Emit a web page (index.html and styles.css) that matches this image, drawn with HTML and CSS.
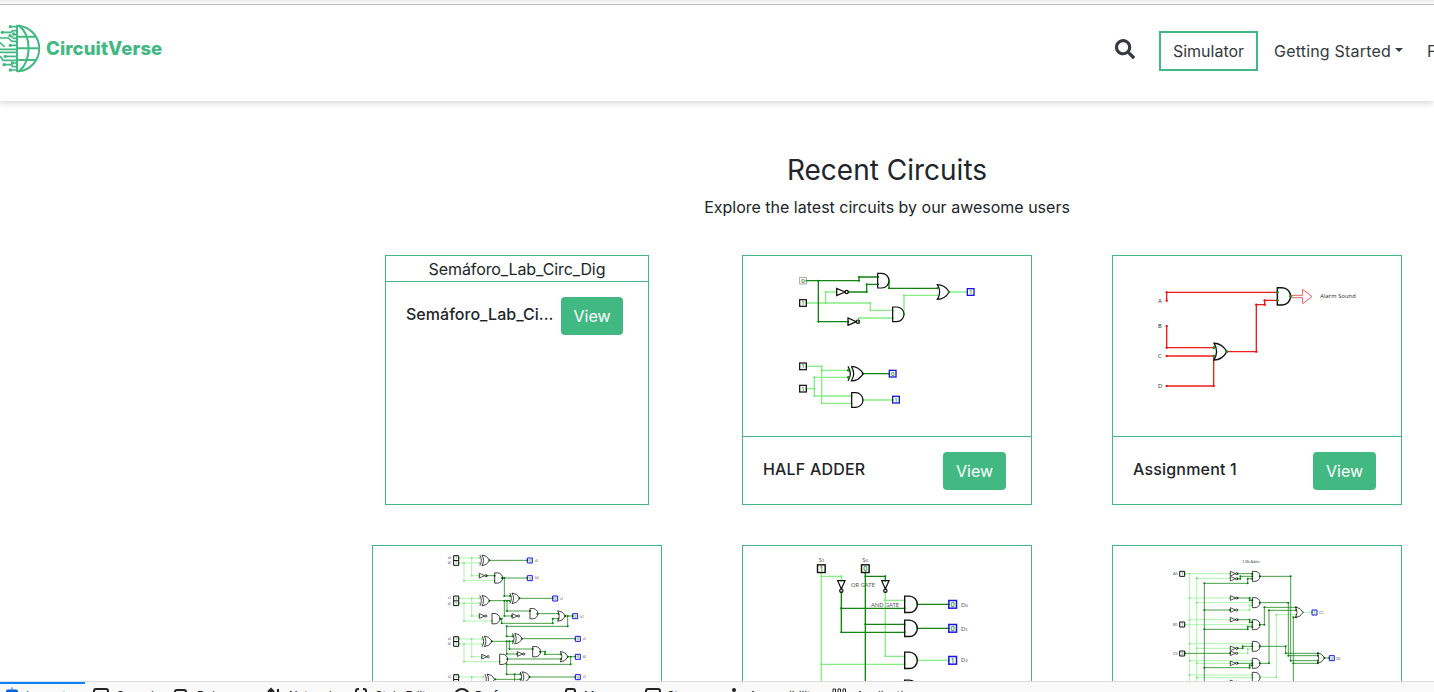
FILE: index.html
```html
<!DOCTYPE html>
<html lang="en">
<head>
<meta charset="utf-8">
<title>CircuitVerse</title>
<link rel="stylesheet" href="styles.css">
</head>
<body>
<svg class="defs" width="0" height="0">
  <defs>
    <path id="and" d="M0-22H12A22 22 0 0 1 12 22H0Z"/>
    <path id="or" d="M0-22Q22-22 36 0Q22 22 0 22Q14 0 0-22Z"/>
    <path id="xor" d="M0-22Q22-22 36 0Q22 22 0 22Q14 0 0-22M-10-22Q4 0-10 22"/>
    <path id="not" d="M0-11V11L25 0ZM25 0a5 5 0 1 0 10 0a5 5 0 1 0-10 0"/>
    <rect id="pin" x="-10" y="-10" width="20" height="20"/>
    <marker id="dotG" markerUnits="userSpaceOnUse" markerWidth="8" markerHeight="8" refX="4" refY="4"><circle cx="4" cy="4" r="3" fill="#008000"/></marker>
    <marker id="dotL" markerUnits="userSpaceOnUse" markerWidth="8" markerHeight="8" refX="4" refY="4"><circle cx="4" cy="4" r="3" fill="#7de87d"/></marker>
    <marker id="dotR" markerUnits="userSpaceOnUse" markerWidth="8" markerHeight="8" refX="4" refY="4"><circle cx="4" cy="4" r="3.5" fill="#f01010"/></marker>
  </defs>
</svg>
<div class="chrome-edge"></div>
<div class="page">
  <header class="navbar">
    <a class="brand">
      <svg class="logo" viewBox="0 66 126 156">
        <path d="M51 75V215M51 77H57A69 69 0 0 1 57 214H51M51 110H108M51 145H120M51 180H108M57 77Q85 98 86 145Q85 192 57 214" stroke-width="6"/>
        <path d="M51 80H33M51 92H38L33 97H8M51 104H41M51 115H42L31 107M51 124H36L25 114H0M51 136H32M51 148H0M51 157H0M51 169H16M51 181H9L0 168M51 189H38M51 200H39L33 194H12M51 210H31M0 128L14 141" stroke-width="5"/>
        <g class="nodes"><circle cx="31" cy="80" r="5"/><circle cx="7" cy="97" r="5"/><circle cx="41" cy="102" r="5"/><circle cx="30" cy="107" r="5"/><circle cx="31" cy="136" r="5"/><circle cx="16" cy="169" r="5"/><circle cx="37" cy="189" r="5"/><circle cx="12" cy="194" r="5"/><circle cx="31" cy="210" r="5"/></g>
      </svg>
      <span class="brand-name">CircuitVerse</span>
    </a>
    <nav class="nav">
      <svg class="search" viewBox="0 0 512 512"><path d="M505 442.700 405.300 343c-4.500-4.500-10.600-7-17-7H372c27.600-35.300 44-79.700 44-128C416 93.100 322.900 0 208 0S0 93.100 0 208s93.100 208 208 208c48.300 0 92.700-16.400 128-44v16.300c0 6.400 2.500 12.500 7 17l99.700 99.700c9.400 9.400 24.600 9.400 33.900 0l28.300-28.300c9.400-9.400 9.400-24.600.1-34zM208 336c-70.700 0-128-57.200-128-128 0-70.700 57.200-128 128-128 70.700 0 128 57.200 128 128 0 70.700-57.200 128-128 128z"/></svg>
      <a class="simulator">Simulator</a>
      <a class="nav-link">Getting Started<span class="caret"></span></a>
      <a class="nav-link features">Features</a>
    </nav>
  </header>
  <main class="container">
    <h2 class="heading">Recent Circuits</h2>
    <p class="lead">Explore the latest circuits by our awesome users</p>
    <div class="grid">
      <article class="card card-narrow">
        <div class="preview-alt">Semáforo_Lab_Circ_Dig</div>
        <div class="card-body"><p class="name">Semáforo_Lab_Ci...</p><a class="view">View</a></div>
      </article>

      <article class="card">
        <svg class="preview" viewBox="-111 -18 864 540">
          <g class="on"><path d="M79 123H271V145H338M137 123V90H170M236 179V168H338M372 157V100H472M506 90H562M79 313H125V325H205M125 325V424H215M79 380H103V346H205M103 380V402H215M248 414H338"/></g>
          <g class="off"><path d="M79 56H237V45H294M115 56V179H205M205 90H260V67H294M327 56V79H472M248 335H328"/></g>
          <g class="gate"><use href="#and" x="293" y="56"/><use href="#and" x="338" y="157"/><use href="#not" x="170" y="90"/><use href="#not" x="204" y="179"/><use href="#or" x="472" y="90"/><use href="#xor" x="214" y="335"/><use href="#and" x="215" y="414"/><use href="#pin" x="69" y="123"/><use href="#pin" x="69" y="313"/><use href="#pin" x="69" y="380"/></g>
          <g class="joints"><circle cx="205" cy="325" r="4"/><circle cx="205" cy="346" r="4"/><circle cx="327" cy="56" r="3"/><circle cx="372" cy="157" r="3"/><circle cx="506" cy="90" r="3"/><circle cx="237" cy="179" r="3"/></g>
          <use class="muted" href="#pin" x="69" y="56"/>
          <g class="out"><use href="#pin" x="572" y="90"/><use href="#pin" x="338" y="335"/><use href="#pin" x="348" y="413"/></g>
          <g class="bits"><text x="69" y="62">0</text><text x="69" y="129">1</text><text x="572" y="96">1</text><text x="69" y="319">1</text><text x="69" y="386">1</text><text x="338" y="341">0</text><text x="348" y="419">1</text></g>
        </svg>
        <div class="card-body"><p class="name">HALF ADDER</p><a class="view">View</a></div>
      </article>

      <article class="card">
        <svg class="preview" viewBox="-81 -18 864 540">
          <g class="red"><path d="M80 116V91H412M80 192V257H221M80 282H221V372H80M260 269H349V128H374V115H412"/></g>
          <path class="arrow" d="M453 100H488V82L516 104L488 125V107H453"/>
          <g class="gate"><use href="#and" transform="translate(412 103) scale(1.170)"/><use href="#or" transform="translate(222 269) scale(1.080 1.150)"/></g>
          <g class="joints"><circle cx="412" cy="91" r="4"/><circle cx="412" cy="115" r="4"/><circle cx="452" cy="103" r="4"/><circle cx="222" cy="257" r="4"/><circle cx="222" cy="282" r="4"/><circle cx="260" cy="269" r="4"/></g>
          <g class="note note-lg"><text x="54" y="122">A</text><text x="54" y="199">B</text><text x="54" y="288">C</text><text x="54" y="378">D</text></g>
          <text class="alarm" x="541" y="109" textLength="106">Alarm Sound</text>
        </svg>
        <div class="card-body"><p class="name">Assignment 1</p><a class="view">View</a></div>
      </article>

      <article class="card">
        <svg class="preview thin" viewBox="-171 18 864 540">
          <g class="on"><path d="M87 54H148M87 69H148M125 54V107H148M102 69V122H194M87 175H148M87 190H148M125 175V228H148M102 190V243H186M87 297H156M87 312H156M125 297V350H156M102 312V365H209M87 411H160M125 411V440"/></g>
          <g class="off"><path d="M178 61H292M170 107H194M217 114H223V168H240M217 114H292M178 182H238M223 182V228H246M231 182V213H300M268 175H368M322 221H385M211 236H215V250H368V236H385M405 228H428M413 228V259H230V289H248M185 304H248M230 304V342H262M238 304V327H308M275 296H436M330 335H345V343H392M232 357H392M413 350H436M422 350V373H230V403H271M196 418H271M254 403V440M298 411H436"/></g>
          <g class="gate"><use href="#xor" transform="translate(156 61) scale(.65 .72)"/><use href="#not" transform="translate(148 107) scale(.65)"/><use href="#and" transform="translate(194 114) scale(.7)"/><use href="#xor" transform="translate(156 182) scale(.65 .72)"/><use href="#xor" transform="translate(246 175) scale(.65 .72)"/><use href="#not" transform="translate(148 228) scale(.65)"/><use href="#not" transform="translate(246 228) scale(.65)"/><use href="#and" transform="translate(186 236) scale(.7)"/><use href="#and" transform="translate(300 221) scale(.7)"/><use href="#or" transform="translate(383 228) scale(.65 .72)"/><use href="#xor" transform="translate(163 304) scale(.65 .72)"/><use href="#xor" transform="translate(254 296) scale(.65 .72)"/><use href="#not" transform="translate(155 350) scale(.65)"/><use href="#not" transform="translate(262 342) scale(.65)"/><use href="#and" transform="translate(209 358) scale(.7)"/><use href="#and" transform="translate(308 335) scale(.7)"/><use href="#or" transform="translate(391 350) scale(.65 .72)"/><use href="#xor" transform="translate(171 418) scale(.65 .72)"/><use href="#xor" transform="translate(277 411) scale(.65 .72)"/>
          <path d="M71 47h15v29h-15zM71 61.500h15M71 168h15v29h-15zM71 182.500h15M71 290h15v29h-15zM71 304.500h15M71 404h15v29h-15zM71 418.500h15"/></g>
          <g class="out"><path d="M292 54h15v15h-15zM292 107h15v15h-15zM368 168h15v15h-15zM428 221h15v15h-15zM436 289h15v15h-15zM436 343h15v15h-15zM436 404h15v15h-15z"/></g>
          <g class="bits bits-sm"><text x="78" y="58">1</text><text x="78" y="73">1</text><text x="78" y="180">1</text><text x="78" y="194">1</text><text x="78" y="301">1</text><text x="78" y="316">1</text><text x="78" y="415">1</text><text x="300" y="66">0</text><text x="300" y="119">0</text><text x="376" y="180">0</text><text x="436" y="233">0</text><text x="444" y="301">0</text><text x="444" y="355">0</text><text x="444" y="416">0</text></g>
          <g class="note note-sm"><text x="53" y="57">a0</text><text x="53" y="73">b0</text><text x="53" y="178">a1</text><text x="53" y="194">b1</text><text x="53" y="300">a2</text><text x="53" y="316">b2</text><text x="53" y="414">a3</text><text x="315" y="65">s0</text><text x="315" y="118">b0</text><text x="390" y="179">s1</text><text x="451" y="233">b1</text><text x="458" y="300">s2</text><text x="458" y="354">b2</text><text x="458" y="415">s3</text></g>
        </svg>
      </article>

      <article class="card">
        <svg class="preview" viewBox="-141 18 864 540">
          <g class="note note-xl"><text x="86" y="67">S<tspan class="sub">1</tspan></text><text x="217" y="67">S<tspan class="sub">0</tspan></text><text x="183" y="140" textLength="72">OR GATE</text><text x="243" y="200" textLength="84">AND GATE</text><text x="513" y="200">D<tspan class="sub">0</tspan></text><text x="513" y="272">D<tspan class="sub">1</tspan></text><text x="513" y="367">D<tspan class="sub">2</tspan></text></g>
          <g class="on"><path d="M94 98V440M94 109H154V122M286 157V181H344M286 181V349H344M94 373H344M382 361H476"/></g>
          <g class="off"><path d="M226 98V440M226 109H286V122M154 157V205H344M154 205V277H344M226 253H344M382 193H476M382 265H476"/></g>
          <g class="gate"><use href="#and" transform="translate(344 193) scale(1.120)"/><use href="#and" transform="translate(344 265) scale(1.120)"/><use href="#and" transform="translate(344 361) scale(1.120)"/><use href="#and" transform="translate(344 445) scale(1.120)"/><use href="#not" transform="translate(154 122) rotate(90)"/><use href="#not" transform="translate(286 122) rotate(90)"/><use href="#pin" transform="translate(94 86) scale(1.150)"/><use href="#pin" transform="translate(226 86) scale(1.150)"/></g>
          <g class="out"><use href="#pin" transform="translate(488 193) scale(1.150)"/><use href="#pin" transform="translate(488 265) scale(1.150)"/><use href="#pin" transform="translate(488 361) scale(1.150)"/></g>
          <g class="bits bits-lg"><text x="94" y="94">1</text><text x="226" y="94">0</text><text x="488" y="200">0</text><text x="488" y="272">0</text><text x="488" y="368">1</text></g>
        </svg>
      </article>

      <article class="card">
        <svg class="preview thin" viewBox="-111 18 864 540">
          <g class="on"><path d="M105 101H240M119 101V440M140 115V440M140 115H240M119 174H240M140 188H307M263 210H299V196H307M119 239H240M105 254H307M119 311H307M140 325H240M263 340H293V327H307M119 362H307M140 370H240M119 405H307M140 413H307M329 412H379V224H438M459 217H486"/></g>
          <g class="off"><path d="M163 440V130H293V116H307M263 101H307M263 116H271V109H307M329 109H422V362H504M263 174H299V181H307M163 210H240M329 188H415V347H504M263 239H299V247H307M163 268H293V260H307M329 254H343V202H438M105 340H240M263 325H278V319H307M329 319H407V340H504M263 370H307M163 383H299V376H307M329 370H357V211H438M438 232H430V440M430 370H504M523 354H538"/></g>
          <g class="gate"><use href="#not" transform="translate(241 101) scale(.63)"/><use href="#not" transform="translate(241 116) scale(.63)"/><use href="#not" transform="translate(241 174) scale(.63)"/><use href="#not" transform="translate(241 210) scale(.63)"/><use href="#not" transform="translate(241 239) scale(.63)"/><use href="#not" transform="translate(241 325) scale(.63)"/><use href="#not" transform="translate(241 340) scale(.63)"/><use href="#not" transform="translate(241 370) scale(.63)"/><use href="#not" transform="translate(241 427) scale(.63)"/><use href="#and" transform="translate(307 109) scale(.68)"/><use href="#and" transform="translate(307 188) scale(.68)"/><use href="#and" transform="translate(307 254) scale(.68)"/><use href="#and" transform="translate(307 319) scale(.68)"/><use href="#and" transform="translate(307 370) scale(.68)"/><use href="#and" transform="translate(307 412) scale(.68)"/><use href="#or" transform="translate(437 217) scale(.62 .7)"/><use href="#or" transform="translate(502 354) scale(.62 .7)"/><path d="M89 94h15v15h-15zM89 246h15v15h-15zM89 333h15v15h-15z"/></g>
          <g class="out"><path d="M486 210h15v15h-15zM538 347h15v15h-15z"/></g>
          <g class="bits bits-sm"><text x="97" y="106">1</text><text x="97" y="258">1</text><text x="97" y="345">0</text><text x="494" y="222">1</text><text x="546" y="359">0</text></g>
          <g class="note note-md"><text x="69" y="106">A<tspan class="sub">0</tspan></text><text x="69" y="258">B<tspan class="sub">0</tspan></text><text x="69" y="345">C<tspan class="sub">0</tspan></text><text x="507" y="222">C<tspan class="sub">1</tspan></text><text x="559" y="359">S<tspan class="sub">0</tspan></text><text x="277" y="69" textLength="53">1 Bit Adder</text></g>
        </svg>
      </article>
    </div>
  </main>
</div>
<footer class="devtools">
  <div class="tab tab-active"><svg class="ico" viewBox="0 0 16 16"><path class="solid" d="M2 4.500Q2 2.500 4 2.500h8q2 0 2 2V13H2z"/><path d="M8 .5v2" opacity=".5"/></svg>Inspector</div>
  <div class="tab t-console"><svg class="ico" viewBox="0 0 16 16"><rect x="1" y="2" width="14" height="12" rx="2"/></svg>Console</div>
  <div class="tab t-debugger"><svg class="ico" viewBox="0 0 16 16"><rect x="2" y="3" width="11" height="10" rx="2"/></svg>Debugger</div>
  <div class="tab t-network"><svg class="ico" viewBox="0 0 16 16"><path d="M5 14V3M2 5l3-3 3 3M12 2v12"/></svg>Network</div>
  <div class="tab t-style"><svg class="ico" viewBox="0 0 16 16"><path d="M6 2H5Q3 2 3 4V6L1 8M10 2h1q2 0 2 2v2l2 2"/></svg>Style Editor</div>
  <div class="tab t-performance"><svg class="ico" viewBox="0 0 16 16"><circle cx="8" cy="9" r="7"/></svg>Performance</div>
  <div class="tab t-memory"><svg class="ico" viewBox="0 0 16 16"><rect x="4" y="2" width="9" height="13" rx="2"/></svg>Memory</div>
  <div class="tab t-storage"><svg class="ico" viewBox="0 0 16 16"><rect x="1" y="2" width="14" height="12" rx="2"/></svg>Storage</div>
  <div class="tab t-access"><svg class="ico" viewBox="0 0 16 16"><circle cx="8" cy="3" r="1"/><path d="M3 7h10"/></svg>Accessibility</div>
  <div class="tab"><svg class="ico ico-thin" viewBox="0 0 16 16"><path d="M2 8V2h2.500v6M7 8V2h2.500v6M12 8V2h2.500v6"/></svg>Application</div>
</footer>
</body>
</html>
```

FILE: styles.css
```css
* { box-sizing: border-box; }
body {
  margin: 0;
  height: 692px;
  overflow: hidden;
  display: flex;
  flex-direction: column;
  background: #fff;
  color: #212529;
  font: 16px/24px Inter, "Liberation Sans", sans-serif;
}
.defs { position: absolute; }
.chrome-edge {
  flex: none;
  height: 5px;
  background: linear-gradient(#e8e8e8, #f9f9f9 60%);
  border-bottom: 1px solid #bdbdbd;
}
.page { flex: 1; min-height: 0; overflow: hidden; }

.navbar {
  display: flex;
  align-items: flex-start;
  justify-content: space-between;
  height: 96px;
  box-shadow: 0 2px 7px rgba(0, 0, 0, .17);
}
.brand { display: flex; align-items: center; padding-top: 17px; color: #42b983; }
.logo { width: 42px; height: 52px; fill: none; stroke: #42b983; }
.logo .nodes { fill: #42b983; stroke: none; }
.brand-name { margin-left: 4px; font-size: 18.5px; font-weight: 800; letter-spacing: .12px; white-space: nowrap; }
.nav { display: flex; align-items: center; width: 319px; padding-top: 26px; flex: none; color: #343a40; }
.search { flex: none; width: 20px; height: 20px; margin-top: -5px; fill: #343a40; }
.simulator {
  flex: none;
  width: 99px;
  height: 40px;
  margin: 0 16px 0 24px;
  border: 2px solid #42b983;
  line-height: 37px;
  text-align: center;
}
.nav-link { flex: none; display: flex; align-items: center; letter-spacing: .2px; white-space: nowrap; }
.caret { margin: -3px 0 0 4px; border: 4px solid transparent; border-top-color: #343a40; border-bottom: 0; }
.features { margin-left: 24px; }

.container { width: 1110px; margin-left: 332px; padding-top: 52px; text-align: center; }
.heading { margin: 0; font-size: 28px; line-height: 34px; font-weight: 400; }
.lead { margin: 8px 0 36px; }
.grid { display: grid; grid-template-columns: repeat(3, 370px); row-gap: 40px; justify-items: center; }
.card { width: 290px; height: 250px; border: 1px solid #42b983; }
.card-narrow { width: 264px; }
.preview { display: block; width: 288px; height: 180px; }
.preview-alt { height: 25px; line-height: 26px; letter-spacing: -.1px; }
.card-body {
  display: flex;
  justify-content: space-between;
  padding: 15px 25px 0 20px;
  border-top: 1px solid #42b983;
}
.name {
  margin: 5px 0 0;
  white-space: nowrap;
  text-align: left;
  font-weight: 500;
  letter-spacing: .18px;
}
.card-narrow .name { letter-spacing: .03px; }
.view {
  flex: none;
  width: 63px;
  height: 38px;
  border-radius: 4px;
  background: #42b983;
  color: #fff;
  line-height: 39px;
}
.card-narrow .view { width: 62px; }

.gate, .muted, .out, .on, .off, .red, .arrow { fill: none; }
.on path, .off path, .red path { stroke-width: 4; }
.on { stroke: #85ee85; marker: url(#dotL); }
.off { stroke: #118411; marker: url(#dotG); }
.red { stroke: #ee1c1c; marker: url(#dotR); }
.gate { stroke: #111; stroke-width: 3.7; }
.muted { stroke: #999; stroke-width: 2.5; }
.out { stroke: #1818e0; stroke-width: 4; }
.arrow { stroke: #e85555; stroke-width: 2.8; }
.joints { fill: #159015; }
.thin .on path, .thin .off path { stroke-width: 2.6; }
.thin .on { stroke: #a0f2a0; }
.thin .off { stroke: #2a902a; }
.thin .gate { stroke-width: 3.4; }
.thin .gate path, .thin .out { stroke-width: 3; }
.bits { fill: #148a14; font: 500 18px "Noto Sans", sans-serif; text-anchor: middle; }
.bits-sm { font-size: 11px; }
.bits-lg { font-size: 22px; }
.note { fill: #555; font-family: Lato, sans-serif; }
.note-sm { font-size: 9px; }
.note-md { font-size: 12px; }
.note-lg { font-size: 17px; fill: #333; }
.note-xl { font-size: 17px; }
.sub { font-size: .8em; }
.alarm { fill: #222; font: 17px "Open Sans", sans-serif; }

.devtools {
  flex: none;
  display: flex;
  height: 11px;
  overflow: hidden;
  background: #f9f9fa;
  border-top: 1px solid #dcdcdc;
  color: #222;
  font-size: 11.5px;
  line-height: 18px;
}
.tab { flex: none; display: flex; gap: 9px; padding-top: 5px; white-space: nowrap; }
.ico { flex: none; width: 16px; height: 16px; fill: none; stroke: currentColor; stroke-width: 2; }
.ico .solid { fill: currentColor; stroke: none; }
.ico-thin { stroke-width: 1; }
.tab-active { width: 85px; padding: 3px 0 0 4px; gap: 6px; border-top: 2px solid #0a84ff; color: #0060df; margin-right: 8px; }
.t-console { width: 80px; gap: 7px; }
.t-debugger { width: 93px; gap: 8px; }
.t-network { width: 87px; gap: 7px; }
.t-style { width: 101px; gap: 6px; }
.t-performance { width: 108px; gap: 5px; }
.t-memory { width: 83px; gap: 6px; }
.t-storage { width: 81px; gap: 6px; }
.t-access { width: 105px; gap: 7px; }
```
